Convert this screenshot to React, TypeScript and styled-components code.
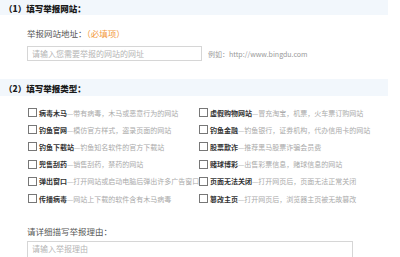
import { createGlobalStyle, styled } from "styled-components";

const GlobalStyle = createGlobalStyle`
    html, body {
        margin: 0;
        padding: 0;
        background: #ffffff;
    }
    body {
        font-family: "Noto Sans CJK SC", "Noto Sans", sans-serif;
        color: #333;
    }
`;

const leftTypes = [
    { name: "病毒木马", desc: "带有病毒，木马或恶意行为的网站" },
    { name: "钓鱼官网", desc: "模仿官方样式，盗录页面的网站" },
    { name: "钓鱼下载站", desc: "钓鱼知名软件的官方下载站" },
    { name: "兜售刮药", desc: "销售刮药，禁药的网站" },
    { name: "弹出窗口", desc: "打开网站或启动电脑后弹出许多广告窗口" },
    { name: "传播病毒", desc: "网站上下载的软件含有木马病毒" },
];

const rightTypes = [
    { name: "虚假购物网站", desc: "冒充淘宝，机票，火车票订购网站" },
    { name: "钓鱼金融", desc: "钓鱼银行，证券机构，代办信用卡的网站" },
    { name: "股票欺诈", desc: "推荐黑马股票诈骗会员费" },
    { name: "赌球博彩", desc: "出售彩票信息，赌球信息的网站" },
    { name: "页面无法关闭", desc: "打开网页后，页面无法正常关闭" },
    { name: "篡改主页", desc: "打开网页后，浏览器主页被无故篡改" },
];

function App() {
    const rows = leftTypes.map((item, i) => [item, rightTypes[i]]);

    return (
        <ReportStyle>
            <GlobalStyle />
            <SectionHead $height={15}>（1）填写举报网站：</SectionHead>
            <div className="site-box">
                <div className="field-label">
                    举报网站地址：<span className="required">（必填项）</span>
                </div>
                <div className="site-input-row">
                    <TextInput $width={175} $height={15} placeholder="请输入您需要举报的网站的网址" />
                    <span className="example">例如：http://www.bingdu.com</span>
                </div>
            </div>
            <SectionHead $height={17}>（2）填写举报类型：</SectionHead>
            <div className="type-grid">
                {rows.flat().map((item) => (
                    <label className="type-item" key={item.name}>
                        <CheckBox type="checkbox" />
                        <b>{item.name}</b>
                        <span className="desc">—{item.desc}</span>
                    </label>
                ))}
            </div>
            <div className="reason-box">
                <div className="field-label">请详细描写举报理由：</div>
                <TextInput $width={326} $height={30} placeholder="请输入举报理由" />
            </div>
        </ReportStyle>
    );
}

type SectionHeadProps = {
    $height: number;
};

const SectionHead = styled.div<SectionHeadProps>`
    width: 384px;
    height: ${(props) => props.$height}px;
    padding-left: 4px;
    background: #f2f7fc;
    display: flex;
    align-items: center;
    font-size: 8.5px;
    font-weight: 900;
    color: #1a1a1a;
`;

type TextInputProps = {
    $width: number;
    $height: number;
};

const TextInput = styled.input<TextInputProps>`
    display: block;
    width: ${(props) => props.$width}px;
    height: ${(props) => props.$height}px;
    margin: 0;
    box-sizing: border-box;
    border: 1px solid #d6d6d6;
    padding: 0 4px;
    font-family: inherit;
    font-size: 8px;
    outline: 0;

    &::placeholder {
        color: #b4b4b4;
    }
`;

const CheckBox = styled.input`
    -webkit-appearance: none;
    appearance: none;
    width: 9px;
    height: 9px;
    margin: 0 2px 0 1px;
    border: 1px solid #777;
    background: #fff;
    flex-shrink: 0;
`;

const ReportStyle = styled.div`
    width: 400px;
    height: 257px;
    overflow: hidden;

    .site-box {
        padding: 10px 0 18px 27px;
    }

    .field-label {
        font-size: 8.5px;
        color: #555;
        height: 16px;
        line-height: 16px;
        margin-bottom: 5px;
    }

    .required {
        color: #f39a3c;
    }

    .site-input-row {
        display: flex;
        align-items: center;
        gap: 6px;
        height: 15px;
    }

    .example {
        font-size: 7px;
        color: #999;
    }

    .type-grid {
        display: grid;
        grid-template-columns: 171px 200px;
        grid-auto-rows: 17.2px;
        padding: 8px 0 0 27px;
    }

    .type-item {
        display: flex;
        align-items: center;
        font-size: 7px;
        line-height: 10px;
        white-space: nowrap;

        b {
            color: #333;
        }

        .desc {
            color: #aaa;
        }
    }

    .reason-box {
        padding: 16px 0 0 27px;

        .field-label {
            margin-bottom: 2px;
        }

        input {
            padding-bottom: 15px;
        }
    }
`;

export default App;
